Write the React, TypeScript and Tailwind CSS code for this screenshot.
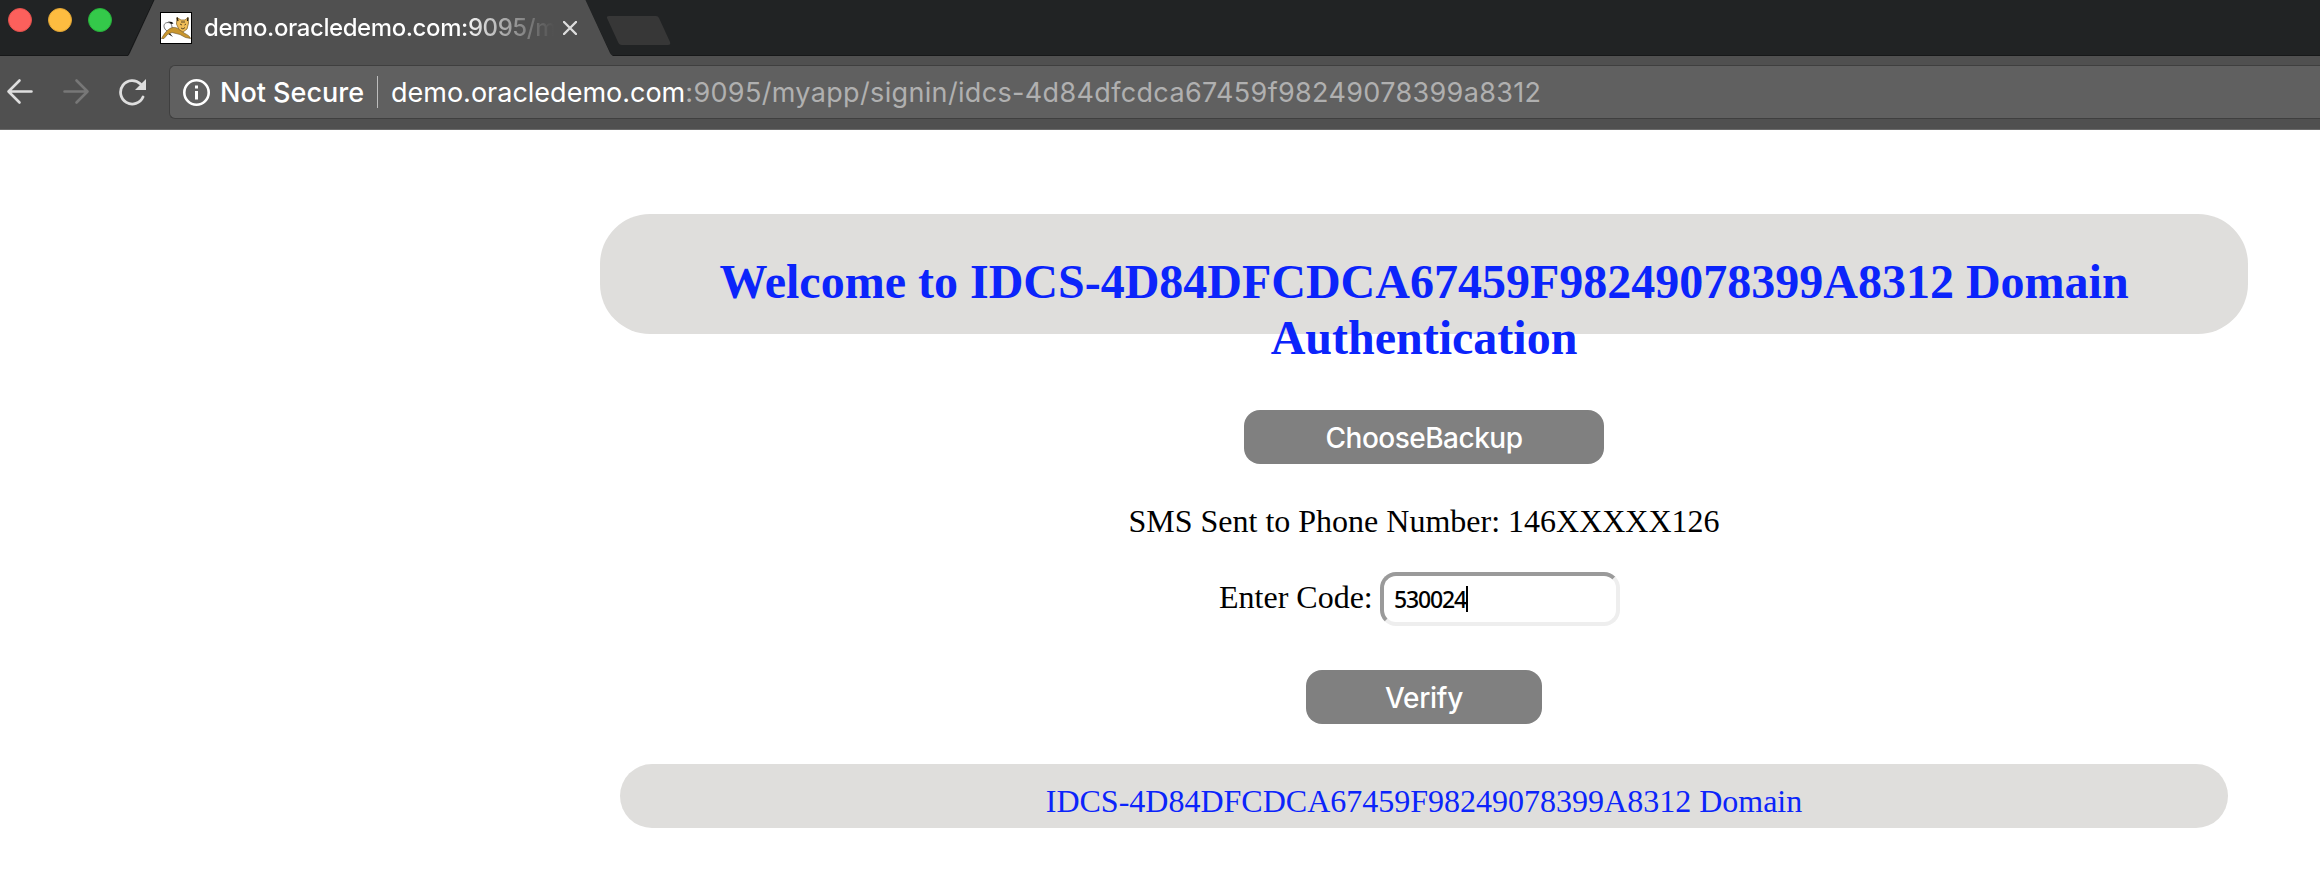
function CatIcon() {
  return (
    <svg width="32" height="32" viewBox="0 0 32 32" className="shrink-0">
      <rect x="0.5" y="0.5" width="31" height="31" fill="#fff" stroke="#000" />
      <path d="M13 17C11 15 13 11 8 10.500C4 10.500 3 14 5 17C6 19 8 19 9 21" fill="none" stroke="#666" strokeWidth="0.900" />
      <path d="M8 9.500L12 10L13.500 11.500L11.500 12ZM8 19L13 25L9 22.500Z" fill="#111" />
      <path d="M1.500 26.500C5 20 9 16 13 15.500C16 15 20 17 24 21C27 22.500 30 24 30.500 26.500L25.500 25.500L20 22.500L12 20.500L7.500 22.500L4 26.500Z" fill="#c9962e" stroke="#6b5428" strokeWidth="0.600" />
      <path d="M17 5.500L21 8H25L28 5.500L28.500 11L27 17L23 20L19 17.500L16.500 12Z" fill="#f0bd57" stroke="#8a6a2c" strokeWidth="0.800" />
      <path d="M17 5.500L18 9M28 5.500L27.500 9" fill="none" stroke="#2b2312" strokeWidth="1.300" />
      <path d="M20 12L22 13M26 12L24.500 13M21 16L23 17L25 15.500M22 9V11M24 9V11" fill="none" stroke="#4a3b20" strokeWidth="0.900" />
    </svg>
  );
}

function TabStrip() {
  return (
    <div className="relative flex h-14 items-start bg-[#212324]">
      <svg className="absolute left-0 top-0" width="2320" height="56" viewBox="0 0 2320 56">
        <path d="M0 55.500H128L154 0H585L611 55.500H2320" fill="none" stroke="#171819" />
        <path d="M128 56Q129 55 130 53L154.500 0H585.500L610 53Q611 55 613 56Z" fill="#505050" />
        <path d="M609 16H656Q658 16 659 18L670 42Q671 45 668 45H622Q619 45 618 42L607 18Q606.500 16 609 16Z" fill="#373737" />
      </svg>
      <div className="relative flex w-full items-start">
        <div className="flex gap-4 pl-2 pt-2">
          <span className="size-6 rounded-full border border-[#e2504c] bg-[#fc605c]" />
          <span className="size-6 rounded-full border border-[#e0a434] bg-[#fdbc40]" />
          <span className="size-6 rounded-full border border-[#27b03a] bg-[#34c94a]" />
        </div>
        <div className="ml-12 flex items-start pt-3">
          <CatIcon />
          <div className="ml-3 w-[350px] whitespace-nowrap bg-gradient-to-r from-white from-74% to-[#505050] bg-clip-text font-[Inter] text-[24px] font-medium leading-8 tracking-[-0.42px] text-transparent">
            demo.oracledemo.com:9095/m
          </div>
          <svg className="ml-[9px] mt-[9px]" width="14" height="14" viewBox="0 0 14 14">
            <path d="M1 1L13 13M13 1L1 13" stroke="#dcdcdc" strokeWidth="2.400" strokeLinecap="round" />
          </svg>
        </div>
      </div>
    </div>
  );
}

function Toolbar() {
  return (
    <div className="flex h-[74px] border-b border-[#6b6b6b] bg-[#505050]">
      <div className="flex w-[169px] shrink-0 items-start pl-[6px] pt-[22px]">
        <svg width="28" height="28" viewBox="0 0 28 28" fill="none" stroke="#dedede" strokeWidth="2.600" strokeLinecap="round" strokeLinejoin="round">
          <path d="M25.500 13.500H3M13.500 2.500L2.500 13.500L13.500 24.500" />
        </svg>
        <svg className="ml-7" width="28" height="28" viewBox="0 0 28 28" fill="none" stroke="#777777" strokeWidth="2.600" strokeLinecap="round" strokeLinejoin="round">
          <path d="M2.500 13.500H25M14.500 2.500L25.500 13.500L14.500 24.500" />
        </svg>
        <svg className="ml-7" width="30" height="28" viewBox="0 0 30 28" fill="none">
          <path d="M22.500 6A11.700 11.700 0 1 0 25 19" stroke="#dedede" strokeWidth="2.800" strokeLinecap="round" />
          <path d="M28 1V12H17Z" fill="#dedede" />
        </svg>
      </div>
      <div className="mt-[9px] flex h-[54px] grow items-start rounded-l-[6px] border border-r-0 border-[#3f3f3f] bg-[#606060] font-[Inter] text-[27px] leading-[54px]">
        <svg className="ml-[13px] mt-[13px]" width="27" height="27" viewBox="0 0 27 27">
          <circle cx="13.500" cy="13.500" r="12.200" fill="none" stroke="#fff" strokeWidth="2.600" />
          <path d="M12 6.500H15V9.500H12ZM12 12H15V20.500H12Z" fill="#fff" />
        </svg>
        <span className="ml-[10px] w-[157px] whitespace-nowrap font-medium text-white">Not Secure</span>
        <span className="mt-[10px] h-8 w-px bg-[#bdbdbd]" />
        <span className="ml-[13px] whitespace-nowrap tracking-[0.34px] text-[#b0b0b0]">
          <span className="tracking-[0px] text-white">demo.oracledemo.com</span>:9095/myapp/signin/idcs-4d84dfcdca67459f98249078399a8312
        </span>
      </div>
    </div>
  );
}

export default function App() {
  return (
    <div className="h-[888px] w-[2320px] overflow-hidden bg-white">
      <TabStrip />
      <Toolbar />
      <main className="ml-[600px] flex w-[1648px] flex-col items-center pt-[84px] font-['Liberation_Serif',serif] text-[32px] leading-9 text-black">
        <header className="h-[120px] w-full rounded-[50px] bg-[#dfdedc] px-[60px] pt-10">
          <h1 className="text-center text-[48px] font-bold leading-[56px] text-[#0b24fb]">
            Welcome to IDCS-4D84DFCDCA67459F98249078399A8312 Domain Authentication
          </h1>
        </header>
        <button className="mt-[76px] h-[54px] w-[360px] rounded-2xl bg-[#808080] pt-0.5 font-[Inter] text-[28px] font-medium leading-[52px] tracking-[-0.5px] text-white">
          ChooseBackup
        </button>
        <p className="mt-[39px] whitespace-nowrap">SMS Sent to Phone Number: 146XXXXX126</p>
        <div className="mt-[33px] flex h-[54px] w-[410px]">
          <label htmlFor="code" className="w-[161px] whitespace-nowrap pt-[7px]">Enter Code:</label>
          <div id="code" className="flex h-[54px] w-60 rounded-2xl border-4 border-b-[#eeeeee] border-l-[#9a9a9a] border-r-[#eeeeee] border-t-[#9a9a9a] bg-white pl-[10px] font-['Noto_Sans'] text-[23px] font-medium leading-[46px]">
            <span className="w-[72px] tracking-[-1.150px]">530024</span>
            <span className="mt-[10px] h-[26px] w-[2px] bg-black" />
          </div>
        </div>
        <button className="mt-11 h-[54px] w-[236px] rounded-2xl bg-[#808080] pt-0.5 font-[Inter] text-[28px] font-medium leading-[52px] tracking-[-0.3px] text-white">
          Verify
        </button>
        <footer className="mt-10 h-16 w-[1608px] rounded-[32px] bg-[#dfdedc] pt-[19px] text-center text-[#0b24fb]">
          IDCS-4D84DFCDCA67459F98249078399A8312 Domain
        </footer>
      </main>
    </div>
  );
}
